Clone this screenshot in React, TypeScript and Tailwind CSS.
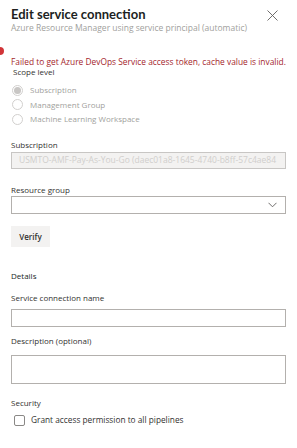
import React from "react";

const font = { fontFamily: '"Open Sans", "Noto Sans", sans-serif' };
const titleFont = { fontFamily: 'Lato, "Open Sans", sans-serif' };

function Radio({ label, checked }: { label: string; checked?: boolean }) {
  return (
    <div className="flex h-[14.5px] items-center">
      <div className="ml-[1px] flex h-[11px] w-[11px] items-center justify-center rounded-full border border-[#d2d0ce]">
        {checked && <div className="h-[7px] w-[7px] rounded-full bg-[#c8c6c4]" />}
      </div>
      <span className="ml-[7px] text-[8px] leading-[12px] text-[#a19f9d]">{label}</span>
    </div>
  );
}

export default function App() {
  return (
    <div className="relative h-[448px] w-[297px] overflow-hidden bg-white text-[#323130]" style={font}>
      <div className="absolute left-[-4px] top-[47px] h-[8px] w-[8px] rounded-full bg-[#d13438]" />
      <div className="px-[11px]">
        <div className="flex items-start justify-between pt-[6px]">
          <div className="text-[13px] font-bold leading-[16px] text-[#201f1e]" style={titleFont}>
            Edit service connection
          </div>
          <svg className="mr-[8px] mt-[4px]" width="11" height="11" viewBox="0 0 11 11">
            <path d="M0.5 0.5 L10.5 10.5 M10.5 0.5 L0.5 10.5" stroke="#605e5c" strokeWidth="0.9" fill="none" />
          </svg>
        </div>
        <div className="whitespace-nowrap text-[8.5px] leading-[12px] text-[#a19f9d]">
          Azure Resource Manager using service principal (automatic)
        </div>
        <div className="mt-[23px] whitespace-nowrap text-[8.4px] leading-[10px] text-[#a4262c]">
          Failed to get Azure DevOps Service access token, cache value is invalid.
        </div>
        <div className="ml-[2px] text-[8px] leading-[9px] text-[#323130]">Scope level</div>
        <div className="mt-[7px]">
          <Radio label="Subscription" checked />
          <Radio label="Management Group" />
          <Radio label="Machine Learning Workspace" />
        </div>
        <div className="mt-[12.5px] text-[8px] leading-[12px] text-[#323130]">Subscription</div>
        <div className="mt-[1px] flex h-[17px] items-center overflow-hidden whitespace-nowrap border border-[#c8c6c4] bg-[#f3f2f1] px-[7px] text-[8.5px] text-[#d0cecc]">
          USMTO-AMF-Pay-As-You-Go (daec01a8-1645-4740-b8ff-57c4ae84
        </div>
        <div className="mt-[15px] text-[8px] leading-[12px] text-[#323130]">Resource group</div>
        <div className="flex h-[18px] items-center justify-end border border-[#b3b0ad] px-[8px]">
          <svg width="9" height="6" viewBox="0 0 9 6">
            <path d="M0.5 0.8 L4.5 4.8 L8.5 0.8" stroke="#605e5c" strokeWidth="0.9" fill="none" />
          </svg>
        </div>
        <button className="mt-[12px] flex h-[21px] w-[39px] items-center justify-center bg-[#f3f2f1] text-[8px] font-semibold text-[#323130]">
          Verify
        </button>
        <div className="mt-[23px] text-[8px] leading-[12px] text-[#201f1e]">Details</div>
        <div className="mt-[10px] text-[8px] leading-[12px] text-[#323130]">Service connection name</div>
        <div className="mt-[5px] h-[18px] border border-[#b3b0ad]" />
        <div className="mt-[8px] text-[8px] leading-[12px] text-[#323130]">Description (optional)</div>
        <div className="mt-[8px] h-[29px] border border-[#b3b0ad]" />
        <div className="mt-[13px] text-[8px] leading-[12px] text-[#323130]">Security</div>
        <div className="mt-[4px] flex h-[14px] items-center">
          <div className="ml-[3px] h-[11px] w-[11px] rounded-[2px] border border-[#8a8886]" />
          <span className="ml-[6px] whitespace-nowrap text-[8.3px] leading-[12px] text-[#323130]">
            Grant access permission to all pipelines
          </span>
        </div>
      </div>
    </div>
  );
}
